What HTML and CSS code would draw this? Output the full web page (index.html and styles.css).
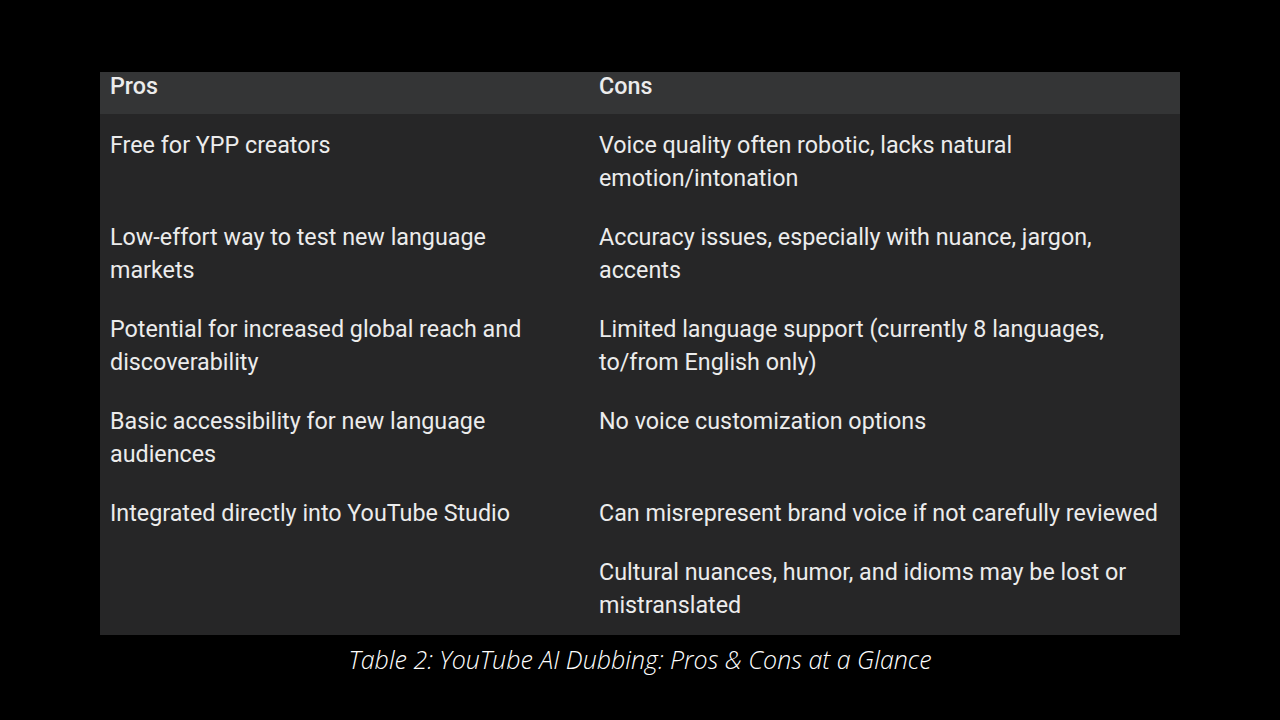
FILE: index.html
```html
<!DOCTYPE html>
<html>
<head>
<meta charset="utf-8">
<link rel="stylesheet" href="styles.css">
</head>
<body>
<div class="page">
  <table class="pc">
    <colgroup><col class="c1"><col class="c2"></colgroup>
    <thead>
      <tr><th>Pros</th><th>Cons</th></tr>
    </thead>
    <tbody>
      <tr><td>Free for YPP creators</td><td>Voice quality often robotic, lacks natural emotion/intonation</td></tr>
      <tr><td>Low-effort way to test new language markets</td><td>Accuracy issues, especially with nuance, jargon, accents</td></tr>
      <tr><td>Potential for increased global reach and discoverability</td><td>Limited language support (currently 8 languages, to/from English only)</td></tr>
      <tr><td>Basic accessibility for new language audiences</td><td>No voice customization options</td></tr>
      <tr><td>Integrated directly into YouTube Studio</td><td>Can misrepresent brand voice if not carefully reviewed</td></tr>
      <tr><td></td><td>Cultural nuances, humor, and idioms may be lost or mistranslated</td></tr>
    </tbody>
  </table>
  <p class="caption">Table 2: YouTube AI Dubbing: Pros &amp; Cons at a Glance</p>
</div>
</body>
</html>
```
FILE: styles.css
```css
html, body {
  margin: 0;
  padding: 0;
  background: #000;
}
.page {
  width: 1280px;
  height: 720px;
  display: flex;
  flex-direction: column;
  align-items: center;
  padding-top: 72px;
  box-sizing: border-box;
}
.pc {
  width: 1080px;
  border-collapse: collapse;
  background: #262627;
  font-family: Roboto, "Liberation Sans", sans-serif;
  font-size: 23.3px;
  color: #ececec;
  table-layout: fixed;
}
.c1 { width: 489px; }
.c2 { width: 591px; }
.pc th {
  background: #343536;
  text-align: left;
  font-weight: 500;
  line-height: 26px;
  padding: 1px 10px 15px 10px;
  height: 26px;
}
.pc td {
  vertical-align: top;
  line-height: 33px;
  padding: 13px 12px 13px 10px;
}
.pc td:first-child { padding-right: 42px; }
.pc tbody tr:first-child td { padding-top: 15px; }
.pc tbody tr:last-child td { padding-bottom: 13px; }
.caption {
  margin: 9px 0 0 0;
  font-family: "Open Sans", "Noto Sans", sans-serif;
  font-style: italic;
  font-weight: 300;
  font-size: 25px;
  color: #fff;
  line-height: 30px;
}
```
